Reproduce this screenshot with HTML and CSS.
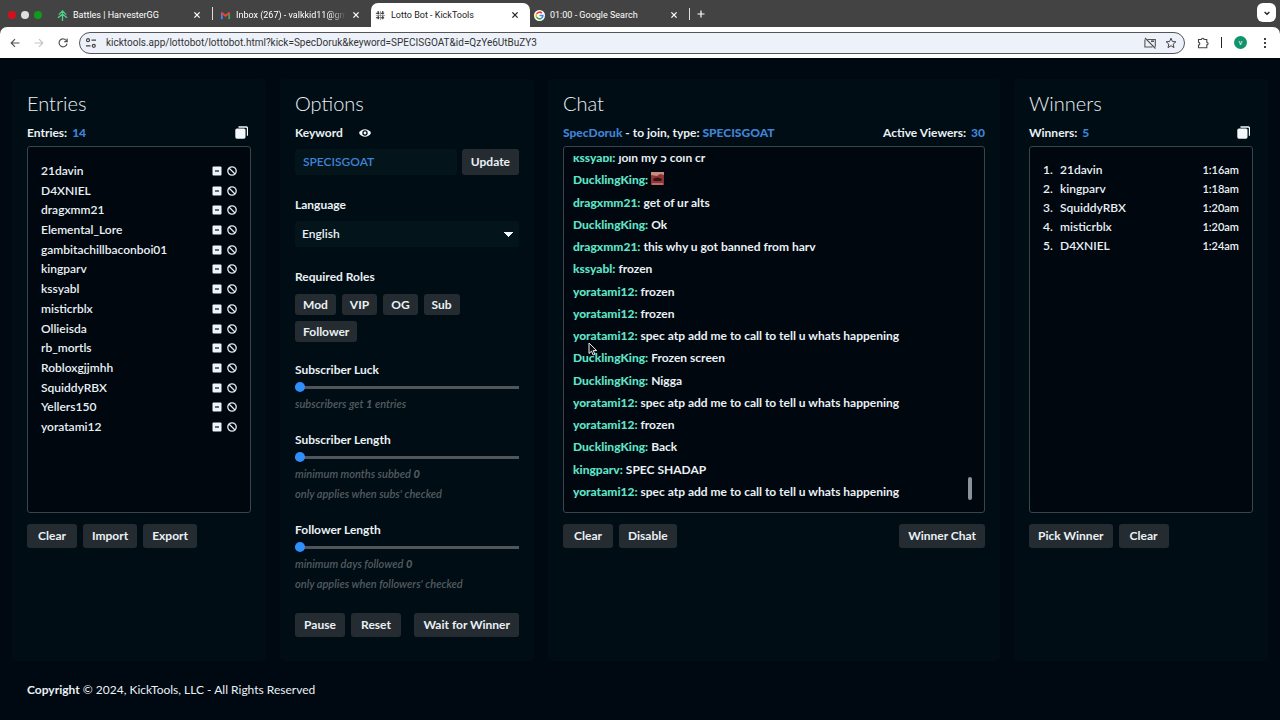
FILE: index.html
```html
<!DOCTYPE html>
<html lang="en">
  <head>
    <meta charset="UTF-8" />
    <meta name="viewport" content="width=device-width, initial-scale=1.0" />
    <title>Lotto Bot - KickTools</title>
    <link rel="stylesheet" href="styles.css">
  </head>
  <body>
    <svg class="sprites" aria-hidden="true">
      <symbol id="close" viewBox="0 0 10 10"><path d="M2.4 2.4l5.2 5.2M7.6 2.4L2.4 7.6" stroke="currentColor" stroke-width="1.3" fill="none" /></symbol>
      <symbol id="minus" viewBox="0 0 10 10"><rect x="0.5" y="0.5" width="9" height="9" rx="1" fill="#eef5fa" /><path d="M3 5h4" stroke="#14202a" stroke-width="1.3" /></symbol>
      <symbol id="ban" viewBox="0 0 10 10"><circle cx="5" cy="5" r="4.2" fill="none" stroke="#e4ecf1" stroke-width="1.3" /><path d="M2 2l6 6" stroke="#e4ecf1" stroke-width="1.3" /></symbol>
      <symbol id="copy" viewBox="0 0 13 13"><path d="M3.5 1h7.6a1.4 1.4 0 0 1 1.4 1.4V9.8" fill="none" stroke="#f3f8fc" stroke-width="1.3" /><rect x="0.3" y="2.5" width="10.2" height="10.2" rx="1.6" fill="#f3f8fc" /></symbol>
    </svg>

    <header class="browser">
      <div class="tabs">
        <div class="lights"><span class="red"></span><span class="white"></span><span class="green"></span></div>
        <div class="tab">
          <svg class="favicon" viewBox="0 0 12 12"><path d="M6 1v11M2 5l4-4 4 4M1 8.5l5-4 5 4" fill="none" stroke="#4fd08a" stroke-width="1.4" /></svg>
          <span class="tab-title">Battles | HarvesterGG</span>
          <button class="close" aria-label="Close tab"><svg><use href="#close" /></svg></button>
        </div>
        <div class="tab divided">
          <svg class="favicon" viewBox="0 0 12 12"><path d="M2 10V3" stroke="#4285f4" stroke-width="2" /><path d="M10 10V3" stroke="#34a853" stroke-width="2" /><path d="M1.4 2.8L6 6.3l4.6-3.5" fill="none" stroke="#ea4335" stroke-width="2" /></svg>
          <span class="tab-title fade">Inbox (267) - valkkid11@gma</span>
          <button class="close" aria-label="Close tab"><svg><use href="#close" /></svg></button>
        </div>
        <div class="tab active">
          <svg class="favicon" viewBox="0 0 12 12"><path d="M3.5 1v10M8.5 1v10M1 3.5h10M1 8.5h10" fill="none" stroke="#2c2c2c" stroke-width="1.2" stroke-dasharray="4 1" /><path d="M6 1v10M1 6h10" stroke="#777" stroke-width="0.7" /></svg>
          <span class="tab-title">Lotto Bot - KickTools</span>
          <button class="close" aria-label="Close tab"><svg><use href="#close" /></svg></button>
        </div>
        <div class="tab">
          <svg class="favicon" viewBox="0 0 12 12"><circle cx="6" cy="6" r="6" fill="#fff" /><g fill="none" stroke-width="1.7"><path d="M8.6 3.4A3.7 3.7 0 0 0 2.8 4.2" stroke="#ea4335" /><path d="M2.8 4.2a3.7 3.7 0 0 0 0 3.6" stroke="#fbbc05" /><path d="M2.8 7.8a3.7 3.7 0 0 0 5.6 1" stroke="#34a853" /><path d="M8.4 8.8A3.7 3.7 0 0 0 9.7 6H6" stroke="#4285f4" /></g></svg>
          <span class="tab-title">01:00 - Google Search</span>
          <button class="close" aria-label="Close tab"><svg><use href="#close" /></svg></button>
        </div>
        <button class="new-tab" aria-label="New tab"><svg viewBox="0 0 10 10"><path d="M5 1.5v7M1.5 5h7" stroke="#fff" stroke-width="1.2" /></svg></button>
        <button class="tab-search" aria-label="Search tabs"><svg viewBox="0 0 10 10"><path d="M2.6 4L5 6.2 7.4 4" fill="none" stroke="#222" stroke-width="1.4" /></svg></button>
      </div>
      <div class="toolbar">
        <button aria-label="Back"><svg viewBox="0 0 12 12"><path d="M10.5 6h-8M6 2.2L2.2 6 6 9.8" fill="none" stroke="#555" stroke-width="1.2" /></svg></button>
        <button aria-label="Forward"><svg viewBox="0 0 12 12"><path d="M1.5 6h8M6 2.2L9.8 6 6 9.8" fill="none" stroke="#c4c4c4" stroke-width="1.2" /></svg></button>
        <button aria-label="Reload"><svg viewBox="0 0 12 12"><path d="M9.8 4.4A4 4 0 1 0 10 6.6M10.2 1.6v3H7.2" fill="none" stroke="#555" stroke-width="1.2" /></svg></button>
        <div class="address">
          <svg viewBox="0 0 12 12"><path d="M6.5 3.2H11M1 8.8h4.5" stroke="#444" stroke-width="1.2" /><circle cx="3" cy="3.2" r="1.5" fill="none" stroke="#444" stroke-width="1.2" /><circle cx="8.8" cy="8.8" r="1.5" fill="none" stroke="#444" stroke-width="1.2" /></svg>
          <input type="text" aria-label="Address" value="kicktools.app/lottobot/lottobot.html?kick=SpecDoruk&amp;keyword=SPECISGOAT&amp;id=QzYe6UtBuZY3" />
          <svg viewBox="0 0 12 12"><path d="M3.5 2.5h7.8v7.3M8.5 10H.9V2.5M1 1l10.5 10.5" fill="none" stroke="#555" stroke-width="1.1" /><path d="M7 4.2h3" stroke="#555" stroke-width="1.6" /></svg>
          <svg viewBox="0 0 12 12"><path d="M6 1.2l1.4 3.3 3.5.3-2.7 2.3.8 3.5-3-1.9-3 1.9.8-3.5L1.1 4.8l3.5-.3z" fill="none" stroke="#444" stroke-width="1" /></svg>
        </div>
        <button class="extensions" aria-label="Extensions"><svg viewBox="0 0 12 12"><path d="M1.5 2.5h3a1.3 1.3 0 0 1 2.6 0h2.7v2.8a1.3 1.3 0 0 1 0 2.6v2.8H1.5V8a1.3 1.3 0 0 0 0-2.7z" fill="none" stroke="#444" stroke-width="1.1" /></svg></button>
        <span class="bar"></span>
        <button class="avatar" aria-label="Profile">v</button>
        <button aria-label="Menu"><svg viewBox="0 0 12 12"><circle cx="6" cy="2" r="1" /><circle cx="6" cy="6" r="1" /><circle cx="6" cy="10" r="1" /></svg></button>
      </div>
    </header>

    <main class="columns">
      <section class="panel">
        <h2>Entries</h2>
        <div class="subhead">
          <span>Entries: <b class="count">14</b></span>
          <button class="icon" aria-label="Copy entries"><svg class="copy"><use href="#copy" /></svg></button>
        </div>
        <div class="box">
          <ul class="entries" id="entries"></ul>
        </div>
        <div class="actions">
          <button class="btn">Clear</button>
          <button class="btn">Import</button>
          <button class="btn">Export</button>
        </div>
      </section>

      <section class="panel">
        <h2>Options</h2>
        <div class="subhead start">
          <label for="keyword">Keyword</label>
          <button class="icon" aria-label="Show keyword"><svg class="eye" viewBox="0 0 12 10"><path d="M0 5C2.5 0 9.5 0 12 5 9.5 10 2.5 10 0 5z" fill="#f3f8fc" /><circle cx="6" cy="5" r="2.7" fill="#010c14" /><circle cx="6" cy="5" r="1.4" fill="#f3f8fc" /></svg></button>
        </div>
        <div class="keyword-row">
          <input type="text" id="keyword" value="SPECISGOAT" />
          <button class="btn">Update</button>
        </div>
        <div class="group">
          <label for="language">Language</label>
          <select id="language">
            <option>English</option>
          </select>
        </div>
        <div class="group">
          <h3>Required Roles</h3>
          <div class="roles">
            <button class="btn small">Mod</button>
            <button class="btn small">VIP</button>
            <button class="btn small">OG</button>
            <button class="btn small">Sub</button>
            <button class="btn small">Follower</button>
          </div>
        </div>
        <div class="group slider">
          <label for="luck">Subscriber Luck</label>
          <input type="range" id="luck" min="1" max="10" value="1" />
          <p>subscribers get <b>1</b> entries</p>
        </div>
        <div class="group slider">
          <label for="subLength">Subscriber Length</label>
          <input type="range" id="subLength" min="0" max="24" value="0" />
          <p>minimum months subbed <b>0</b></p>
          <p>only applies when subs' checked</p>
        </div>
        <div class="group slider">
          <label for="followLength">Follower Length</label>
          <input type="range" id="followLength" min="0" max="90" value="0" />
          <p>minimum days followed <b>0</b></p>
          <p>only applies when followers' checked</p>
        </div>
        <div class="actions last">
          <button class="btn">Pause</button>
          <button class="btn">Reset</button>
          <button class="btn push">Wait for Winner</button>
        </div>
      </section>

      <section class="panel">
        <h2>Chat</h2>
        <div class="subhead">
          <span><b class="blue">SpecDoruk</b> - to join, type: <b class="blue">SPECISGOAT</b></span>
          <span>Active Viewers: <b class="count">30</b></span>
        </div>
        <div class="box chat">
          <div class="scroller">
            <ul class="messages" id="messages"></ul>
          </div>
          <span class="thumb"></span>
          <svg class="cursor" viewBox="0 0 10 14"><path d="M1 1v10.5l2.5-2.3 1.7 3.8 1.7-.8-1.7-3.6h3.5z" fill="#111" stroke="#eee" stroke-width="1" /></svg>
        </div>
        <div class="actions">
          <button class="btn">Clear</button>
          <button class="btn">Disable</button>
          <button class="btn push">Winner Chat</button>
        </div>
      </section>

      <section class="panel">
        <h2>Winners</h2>
        <div class="subhead">
          <span>Winners: <b class="count">5</b></span>
          <button class="icon" aria-label="Copy winners"><svg class="copy"><use href="#copy" /></svg></button>
        </div>
        <div class="box won">
          <ol class="winners">
            <li><span>1.</span>21davin<time>1:16am</time></li>
            <li><span>2.</span>kingparv<time>1:18am</time></li>
            <li><span>3.</span>SquiddyRBX<time>1:20am</time></li>
            <li><span>4.</span>misticrblx<time>1:20am</time></li>
            <li><span>5.</span>D4XNIEL<time>1:24am</time></li>
          </ol>
        </div>
        <div class="actions">
          <button class="btn">Pick Winner</button>
          <button class="btn">Clear</button>
        </div>
      </section>
    </main>

    <footer><b>Copyright</b> © 2024, KickTools, LLC - All Rights Reserved</footer>

    <script>
      const entries = [
        "21davin", "D4XNIEL", "dragxmm21", "Elemental_Lore", "gambitachillbaconboi01",
        "kingparv", "kssyabl", "misticrblx", "Ollieisda", "rb_mortls",
        "Robloxgjjmhh", "SquiddyRBX", "Yellers150", "yoratami12"
      ];

      const emote = `<svg class="emote" viewBox="0 0 13 13"><rect width="13" height="13" fill="#8e3535" /><path d="M0 0h13v3L9 2 6 4 0 3z" fill="#c98a80" /><path d="M2 7q4-3 9 0l-1 2H3z" fill="#35121a" /><path d="M1 11h11v2H1z" fill="#c06a62" /></svg>`;

      const messages = [
        ["kssyabl", "join my 5 coin cr"],
        ["DucklingKing", emote],
        ["dragxmm21", "get of ur alts"],
        ["DucklingKing", "Ok"],
        ["dragxmm21", "this why u got banned from harv"],
        ["kssyabl", "frozen"],
        ["yoratami12", "frozen"],
        ["yoratami12", "frozen"],
        ["yoratami12", "spec atp add me to call to tell u whats happening"],
        ["DucklingKing", "Frozen screen"],
        ["DucklingKing", "Nigga"],
        ["yoratami12", "spec atp add me to call to tell u whats happening"],
        ["yoratami12", "frozen"],
        ["DucklingKing", "Back"],
        ["kingparv", "SPEC SHADAP"],
        ["yoratami12", "spec atp add me to call to tell u whats happening"]
      ];

      document.getElementById("entries").innerHTML = entries.map((name) => `
        <li>
          <span>${name}</span>
          <button class="icon" aria-label="Remove ${name}"><svg><use href="#minus" /></svg></button>
          <button class="icon" aria-label="Ban ${name}"><svg><use href="#ban" /></svg></button>
        </li>`).join("");

      document.getElementById("messages").innerHTML = messages
        .map(([name, text]) => `<li><b>${name}:</b> ${text}</li>`)
        .join("");
    </script>
  </body>
</html>
```
FILE: styles.css
```css
* {
  box-sizing: border-box;
}
body {
  margin: 0;
  min-height: 100vh;
  background: #000812;
  color: #eaf1f5;
  font: 600 12px/16px Lato, sans-serif;
}
button, input, select {
  font: inherit;
  color: inherit;
}
button {
  border: none;
  padding: 0;
  background: none;
  cursor: pointer;
}
svg {
  display: block;
}
h2, h3, p, ul, ol {
  margin: 0;
  padding: 0;
}
ul, ol {
  list-style: none;
}
.sprites {
  position: absolute;
  width: 0;
  height: 0;
}

/* browser bar */
.browser {
  background: #434343;
  font: 10px/14px Roboto, sans-serif;
}
.tabs {
  display: flex;
  height: 27px;
  padding: 3px 4px 0 8px;
  color: #fff;
  font-size: 9px;
}
.lights {
  display: flex;
  align-items: center;
  gap: 5px;
  width: 45px;
}
.lights span {
  width: 8px;
  height: 8px;
  border-radius: 50%;
}
.red { background: #d4101c; }
.white { background: #ddd; }
.green { background: #119a1a; }
.tab {
  display: flex;
  align-items: center;
  gap: 5px;
  flex: 0 1 159px;
  min-width: 0;
  padding: 0 10px 0 4px;
}
.tab.divided {
  border-left: 1px solid #ddd;
  border-image: linear-gradient(transparent 5px, #ddd 5px, #ddd 17px, transparent 17px) 1;
  padding-left: 7px;
}
.tab.active {
  background: #fff;
  color: #222;
  border-radius: 7px 7px 0 0;
}
.favicon {
  flex: none;
  width: 11px;
  height: 11px;
}
.tab-title {
  flex: 1;
  overflow: hidden;
  white-space: nowrap;
}
.fade {
  mask-image: linear-gradient(90deg, #000 85%, transparent);
}
.close svg, .new-tab svg, .tab-search svg {
  width: 10px;
  height: 10px;
}
.new-tab {
  margin: 5px 0 7px;
  border-left: 1px solid #ddd;
  padding-left: 6px;
}
.tab-search {
  display: flex;
  align-items: center;
  justify-content: center;
  width: 19px;
  height: 19px;
  margin-left: auto;
  border-radius: 6px;
  background: #fff;
}
.toolbar {
  display: flex;
  align-items: center;
  gap: 12px;
  height: 31px;
  padding: 0 9px;
  background: #fff;
  border-radius: 7px 7px 0 0;
}
.toolbar svg {
  flex: none;
  width: 12px;
  height: 12px;
}
.address {
  display: flex;
  align-items: center;
  gap: 9px;
  flex: 1;
  height: 22px;
  margin-left: -2px;
  padding: 0 7px 0 5px;
  border: 1px solid #555;
  border-radius: 11px;
  background: #edf1f9;
}
.address input {
  flex: 1;
  min-width: 0;
  padding: 0;
  border: none;
  background: none;
  color: #333;
}
.bar {
  width: 1px;
  height: 11px;
  background: #222;
}
.avatar {
  width: 13px;
  height: 13px;
  border-radius: 50%;
  background: #11936b;
  color: #fff;
  font-size: 8px;
  line-height: 13px;
}

/* panels */
.columns {
  display: grid;
  grid-template-columns: 254fr 254fr 452fr 254fr;
  gap: 14px;
  padding: 21px 12px 12px;
}
.panel {
  min-width: 0;
  padding: 11px 15px 24px;
  border-radius: 4px;
  background: #010d14;
}
h2 {
  margin-bottom: 9px;
  font-size: 20px;
  font-weight: 300;
  line-height: 26px;
}
h3, label {
  display: block;
  font-size: 12px;
  font-weight: 700;
}
.subhead {
  display: flex;
  align-items: center;
  justify-content: space-between;
  height: 16px;
  margin-bottom: 5px;
  font-weight: 700;
}
.subhead.start {
  justify-content: flex-start;
  gap: 16px;
}
.count {
  margin-left: 2px;
  color: #3f83d6;
}
.blue {
  color: #3f83d6;
}
.copy {
  width: 13px;
  height: 13px;
  margin: 0 3px 2px 0;
}
.eye {
  width: 12px;
  height: 10px;
}
.box {
  height: 367px;
  padding: 16px 13px;
  border: 1px solid #3a444b;
  border-radius: 3px;
  background: #00070f;
}
.box.won {
  padding-top: 13px;
}
.entries, .messages {
  display: flex;
  flex-direction: column;
  justify-content: space-between;
}
.entries {
  height: 272px;
}
.entries li {
  display: flex;
  align-items: center;
  gap: 5px;
}
.entries span {
  flex: 1;
}
.entries svg {
  width: 10px;
  height: 10px;
}
.chat {
  position: relative;
  padding: 9px;
}
.scroller {
  display: flex;
  flex-direction: column;
  justify-content: flex-end;
  height: 347px;
  overflow: hidden;
}
.messages {
  flex: none;
  height: 356px;
}
.messages li {
  font-weight: 700;
  line-height: 22px;
}
.messages b {
  color: #5fe3c8;
}
.emote {
  display: inline-block;
  width: 13px;
  height: 13px;
  vertical-align: -1px;
}
.thumb {
  position: absolute;
  right: 12px;
  bottom: 12px;
  width: 4px;
  height: 23px;
  border-radius: 2px;
  background: #8d9296;
}
.cursor {
  position: absolute;
  left: 24px;
  top: 195px;
  width: 10px;
  height: 14px;
}
.winners li {
  display: flex;
  line-height: 19px;
}
.winners span {
  width: 17px;
}
.winners time {
  margin-left: auto;
  font-size: 11px;
}

/* controls */
.btn {
  min-width: 50px;
  height: 24px;
  padding: 0 9px;
  border-radius: 3px;
  background: #252c31;
  font-size: 12px;
  font-weight: 700;
  white-space: nowrap;
}
.btn.small {
  min-width: 0;
  height: 21px;
  padding: 0 8px;
}
.push {
  margin-left: auto;
}
.actions {
  display: flex;
  gap: 6px;
  margin-top: 11px;
}
.actions.last {
  margin-top: 21px;
}
.keyword-row {
  display: flex;
  gap: 5px;
  margin-top: 8px;
}
.keyword-row input {
  flex: 1;
  min-width: 0;
  padding: 0 8px;
  border: none;
  border-radius: 3px;
  background: #04141b;
  color: #3f83d6;
}
.keyword-row .btn, select {
  height: 26px;
}
.group {
  margin-top: 22px;
}
.group.slider {
  margin-top: 20px;
}
select {
  width: 100%;
  margin-top: 8px;
  padding: 0 7px;
  border: none;
  border-radius: 3px;
  appearance: none;
  background: #04141b;
  background-image: conic-gradient(from -45deg at 50% 100%, #f3f8fc 90deg, transparent 0);
  background-position: right 6px center;
  background-repeat: no-repeat;
  background-size: 10px 5px;
}
.roles {
  display: flex;
  flex-wrap: wrap;
  gap: 6px;
  margin: 9px 0 2px;
}
input[type="range"] {
  display: block;
  width: 100%;
  height: 10px;
  margin: 4px 0;
  appearance: none;
  background: linear-gradient(#50565a, #50565a) center / 100% 3px no-repeat;
}
input[type="range"]::-webkit-slider-thumb {
  appearance: none;
  width: 10px;
  height: 10px;
  border-radius: 50%;
  background: #2f8fff;
}
.group p {
  color: #535b60;
  font-size: 11px;
  font-style: italic;
}
.group p + p {
  margin-top: 4px;
}

footer {
  margin: 0 12px;
  padding: 8px 15px;
  font-weight: 400;
  line-height: 18px;
}
```
